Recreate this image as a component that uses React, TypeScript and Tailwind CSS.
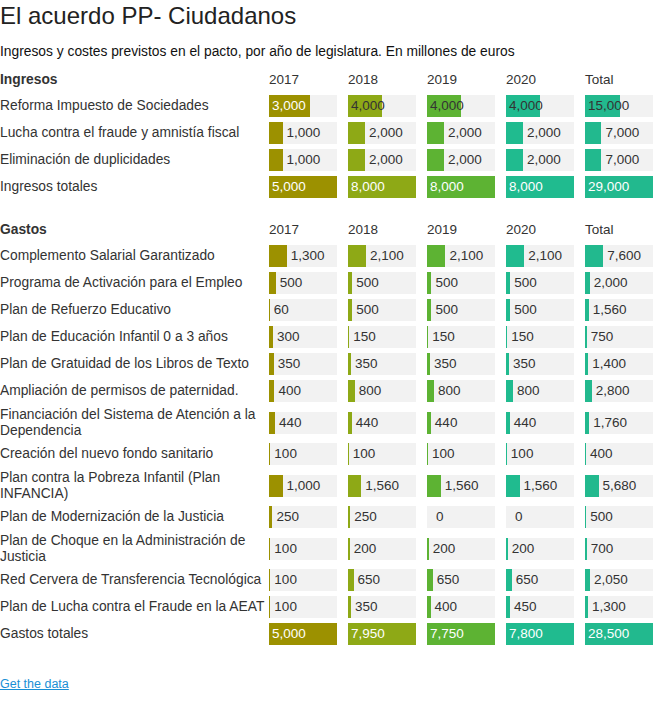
const COLORS = ['#9c9100', '#8ea916', '#5db333', '#20bb8f', '#22b98e']
const YEARS = ['2017', '2018', '2019', '2020', 'Total']

type Row = { label: string[]; values: number[] }

const ingresos: Row[] = [
  { label: ['Reforma Impuesto de Sociedades'], values: [3000, 4000, 4000, 4000, 15000] },
  { label: ['Lucha contra el fraude y amnistía fiscal'], values: [1000, 2000, 2000, 2000, 7000] },
  { label: ['Eliminación de duplicidades'], values: [1000, 2000, 2000, 2000, 7000] },
]
const ingresosTotal: Row = { label: ['Ingresos totales'], values: [5000, 8000, 8000, 8000, 29000] }

const gastos: Row[] = [
  { label: ['Complemento Salarial Garantizado'], values: [1300, 2100, 2100, 2100, 7600] },
  { label: ['Programa de Activación para el Empleo'], values: [500, 500, 500, 500, 2000] },
  { label: ['Plan de Refuerzo Educativo'], values: [60, 500, 500, 500, 1560] },
  { label: ['Plan de Educación Infantil 0 a 3 años'], values: [300, 150, 150, 150, 750] },
  { label: ['Plan de Gratuidad de los Libros de Texto'], values: [350, 350, 350, 350, 1400] },
  { label: ['Ampliación de permisos de paternidad.'], values: [400, 800, 800, 800, 2800] },
  { label: ['Financiación del Sistema de Atención a la', 'Dependencia'], values: [440, 440, 440, 440, 1760] },
  { label: ['Creación del nuevo fondo sanitario'], values: [100, 100, 100, 100, 400] },
  { label: ['Plan contra la Pobreza Infantil (Plan', 'INFANCIA)'], values: [1000, 1560, 1560, 1560, 5680] },
  { label: ['Plan de Modernización de la Justicia'], values: [250, 250, 0, 0, 500] },
  { label: ['Plan de Choque en la Administración de', 'Justicia'], values: [100, 200, 200, 200, 700] },
  { label: ['Red Cervera de Transferencia Tecnológica'], values: [100, 650, 650, 650, 2050] },
  { label: ['Plan de Lucha contra el Fraude en la AEAT'], values: [100, 350, 400, 450, 1300] },
]
const gastosTotal: Row = { label: ['Gastos totales'], values: [5000, 7950, 7750, 7800, 28500] }

const fmt = (n: number) => n.toLocaleString('en-US')

function Cell({ value, max, col, total }: { value: number; max: number; col: number; total?: boolean }) {
  const w = (value / max) * 68
  const inside = value / max > 0.4
  const white = inside && (total || col === 0)

  return (
    <div className="w-[68px] h-[22px] bg-[#f2f2f2] flex items-center overflow-visible text-[13.5px]">
      {inside ? (
        <div className="h-full flex items-center shrink-0" style={{ width: w, backgroundColor: COLORS[col] }}>
          <span className={`pl-[3px] whitespace-nowrap leading-[22px] ${white ? 'text-white' : 'text-[#333]'}`}>
            {fmt(value)}
          </span>
        </div>
      ) : (
        <>
          <div className="h-full shrink-0" style={{ width: w, backgroundColor: COLORS[col] }} />
          <span className={`whitespace-nowrap leading-[22px] text-[#333] ${value === 0 ? 'ml-[9px]' : 'ml-[4px]'}`}>
            {fmt(value)}
          </span>
        </>
      )}
    </div>
  )
}

function DataRow({ row, maxes, total }: { row: Row; maxes: number[]; total?: boolean }) {
  const tall = row.label.length > 1
  return (
    <div className={`flex items-center mb-[5px] ${tall ? 'h-[31px]' : 'h-[22px]'}`}>
      <div className="w-[269px] shrink-0 text-[#333] leading-[15.5px]">
        {row.label.map((l, i) => (
          <div key={i} className="whitespace-nowrap">{l}</div>
        ))}
      </div>
      <div className="flex gap-[11px]">
        {row.values.map((v, i) => (
          <Cell key={i} value={v} max={maxes[i]} col={i} total={total} />
        ))}
      </div>
    </div>
  )
}

function Section({ title, rows, total }: { title: string; rows: Row[]; total: Row }) {
  return (
    <div>
      <div className="flex items-center h-[22px] mb-[4px]">
        <div className="w-[269px] shrink-0 font-bold text-[#333]">{title}</div>
        <div className="flex gap-[11px] text-[#333] text-[13.5px]">
          {YEARS.map((y) => (
            <div key={y} className="w-[68px]">{y}</div>
          ))}
        </div>
      </div>
      {rows.map((r, i) => (
        <DataRow key={i} row={r} maxes={total.values} />
      ))}
      <DataRow row={total} maxes={total.values} total />
    </div>
  )
}

export default function App() {
  return (
    <div className="w-[664px] min-h-[721px] bg-white pt-[2px] text-[13.8px] font-['Liberation_Sans',Arial,sans-serif]">
      <h1 className="text-[24px] leading-[28px] text-[#222]">El acuerdo PP- Ciudadanos</h1>
      <p className="mt-[14px] leading-[16px] text-[#111]">
        Ingresos y costes previstos en el pacto, por año de legislatura. En millones de euros
      </p>
      <div className="mt-[9px]">
        <Section title="Ingresos" rows={ingresos} total={ingresosTotal} />
        <div className="mt-[21px]">
          <Section title="Gastos" rows={gastos} total={gastosTotal} />
        </div>
      </div>
      <a href="#" className="block mt-[31px] text-[12.5px] leading-[16px] text-[#1a8fd5] underline">
        Get the data
      </a>
    </div>
  )
}
